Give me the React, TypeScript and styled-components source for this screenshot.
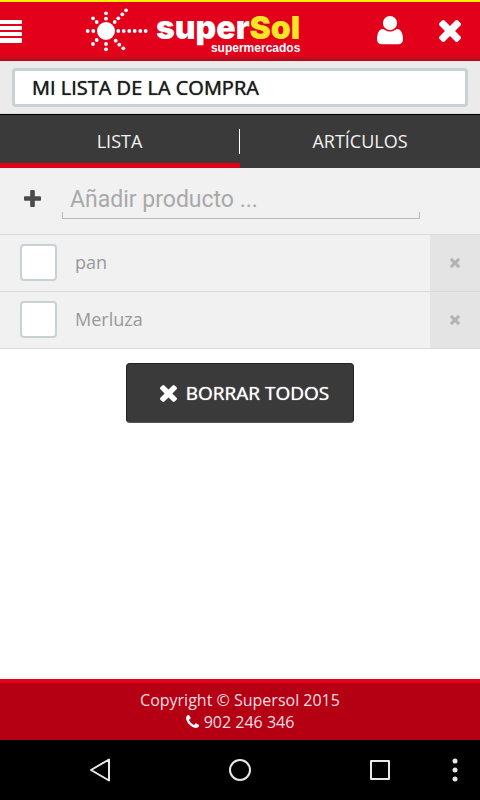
import React, { useState } from "react";
import styled, { createGlobalStyle } from "styled-components";

const GlobalStyle = createGlobalStyle`
  * { box-sizing: border-box; }
  body { margin: 0; background: #fff; font-family: "Open Sans", "Noto Sans", sans-serif; }
  button, input { font: inherit; margin: 0; padding: 0; border: 0; border-radius: 0; }
  button { background: none; color: inherit; cursor: pointer; }
  ul { list-style: none; margin: 0; padding: 0; }
`;

const Page = styled.div`
  display: flex;
  flex-direction: column;
  min-height: 100vh;
`;

const Header = styled.header`
  display: flex;
  align-items: center;
  height: 61px;
  background: #e3001b;
  border-top: 2px solid #fff200;
  border-bottom: 1px solid #c00010;
  box-shadow: inset 0 -3px 0 #b90f1e;
`;

const IconButton = styled.button<{ $width: number }>`
  display: flex;
  align-items: center;
  justify-content: flex-start;
  width: ${(p) => p.$width}px;
  height: 56px;
  color: #fff;
`;

const HeaderActions = styled.div`
  display: flex;
  align-items: center;
  gap: 36px;
  margin-left: auto;
  padding-right: 19px;
`;

const Logo = styled.a`
  display: flex;
  align-items: flex-start;
  height: 56px;
  color: #fff;
  text-decoration: none;
`;

const LogoWords = styled.span`
  display: flex;
  flex-direction: column;
  align-items: flex-end;
  margin-left: 8px;
  padding-top: 8px;
`;

const LogoName = styled.span`
  font: 900 32px/34px Inter, sans-serif;

  span {
    color: #f9e526;
  }
`;

const LogoTag = styled.span`
  font: bold 12px/14px "Liberation Sans", sans-serif;
  margin-top: -4px;
`;

const TitleBar = styled.div`
  padding: 7px 12px 6px;
  background: #ebebeb;
  border-bottom: 1px solid #ddd;
`;

const TitleInput = styled.input`
  display: block;
  width: 100%;
  height: 39px;
  padding: 0 17px;
  border: 3px solid #c8d1d3;
  border-radius: 4px;
  background: #fff;
  color: #1c1c1c;
  font-size: 20px;
  text-shadow: 0 0 1px #1c1c1c;
`;

const Tabs = styled.div`
  display: grid;
  grid-template-columns: 1fr 1fr;
  background: #3a3a3a;
  border-top: 1px solid #000;
`;

const Tab = styled.button<{ $active: boolean }>`
  display: flex;
  align-items: center;
  height: 53px;
  padding-top: 4px;
  border-bottom: 5px solid ${(p) => (p.$active ? "#e3001b" : "transparent")};
  color: #f2f2f2;
  font-size: 18px;
  line-height: 24px;

  span {
    flex: 1;
  }

  &:first-child::after {
    content: "";
    width: 1px;
    height: 25px;
    background: #fff;
  }
`;

const AddRow = styled.form`
  display: flex;
  align-items: center;
  height: 66px;
  padding: 0 60px 4px 24px;
  background: #f1f1f1;
`;

const AddButton = styled.button`
  display: flex;
  width: 38px;
  margin-top: -2px;
  color: #4a4a4a;
`;

const AddInput = styled.input`
  flex: 1;
  min-width: 0;
  height: 40px;
  padding: 0 8px 0 8px;
  background:
    linear-gradient(#bbb, #bbb) left bottom / 100% 1px no-repeat,
    linear-gradient(#bbb, #bbb) left bottom / 1px 7px no-repeat,
    linear-gradient(#bbb, #bbb) right bottom / 1px 7px no-repeat;
  color: #555;
  font-family: Roboto, sans-serif;
  font-size: 23px;

  &::placeholder {
    color: #a9a9a9;
  }
`;

const Item = styled.li`
  display: flex;
  align-items: stretch;
  background: #f1f1f1;
  border-top: 1px solid #dadada;

  &:last-child {
    border-bottom: 1px solid #dadada;
  }
`;

const ItemLabel = styled.label`
  display: flex;
  flex: 1;
  align-items: center;
  gap: 18px;
  min-height: 56px;
  padding: 0 0 2px 20px;
  color: #999;
  font-size: 18px;
  line-height: 24px;
`;

const Checkbox = styled.input`
  appearance: none;
  width: 37px;
  height: 37px;
  border: 2px solid #c8d1d4;
  border-radius: 4px;
  background: #fff;

  &:checked {
    background: #c8d1d4;
  }
`;

const RemoveButton = styled.button`
  display: flex;
  align-items: center;
  justify-content: center;
  width: 50px;
  background: #e4e4e4;
  color: #b4b4b4;
`;

const ClearButton = styled.button`
  display: flex;
  align-items: center;
  align-self: center;
  gap: 9px;
  height: 60px;
  margin: 14px 0;
  padding: 0 24px 0 33px;
  border: 1px solid #222;
  border-bottom-color: #555;
  border-radius: 4px;
  background: #3a3a3a;
  color: #fff;
  font-size: 19px;
  text-shadow: 0 0 1px #fff;
`;

const Footer = styled.footer`
  margin-top: auto;
  padding: 6px 0 7px;
  border-top: 4px solid #e3001b;
  background: #b50014;
  color: #f6dfe1;
  font-size: 16px;
  line-height: 22px;
  text-align: center;

  p {
    margin: 0;
  }

  a {
    display: inline-flex;
    align-items: center;
    gap: 5px;
    color: inherit;
    text-decoration: none;
  }
`;

const SystemBar = styled.nav`
  display: grid;
  grid-template-columns: 30px 1fr 1fr 1fr 30px;
  height: 60px;
  background: #000;
  color: #e8e8e8;
`;

const SystemButton = styled.button`
  display: flex;
  align-items: center;
  justify-content: center;

  &:last-child {
    justify-content: flex-start;
    padding-left: 2px;
  }
`;

const TimesIcon = ({ size }: { size: number }) => (
  <svg width={size} height={size} viewBox="302 366 1188 1188" fill="currentColor" aria-hidden="true">
    <path d="M1490 1322q0 40-28 68l-136 136q-28 28-68 28t-68-28l-294-294-294 294q-28 28-68 28t-68-28l-136-136q-28-28-28-68t28-68l294-294-294-294q-28-28-28-68t28-68l136-136q28-28 68-28t68 28l294 294 294-294q28-28 68-28t68 28l136 136q28 28 28 68t-28 68l-294 294 294 294q28 28 28 68z" />
  </svg>
);

const PlusIcon = () => (
  <svg width="17" height="17" viewBox="192 128 1408 1408" fill="currentColor" aria-hidden="true">
    <path d="M1600 736v192q0 40-28 68t-68 28h-416v416q0 40-28 68t-68 28h-192q-40 0-68-28t-28-68v-416h-416q-40 0-68-28t-28-68v-192q0-40 28-68t68-28h416v-416q0-40 28-68t68-28h192q40 0 68 28t28 68v416h416q40 0 68 28t28 68z" />
  </svg>
);

const UserIcon = () => (
  <svg width="26" height="31" viewBox="0 -128 1408 1680" fill="currentColor" aria-hidden="true">
    <g transform="translate(0 1280) scale(1 -1)">
      <path d="M1408 131q0-120-73-189.5t-194-69.5h-874q-121 0-194 69.5t-73 189.5q0 53 3.5 103.5t14 109t26.5 108.5t43 97.5t62 81t85.5 53.5t111.5 20q9 0 42-21.5t74.5-48t108-48t133.5-21.5t133.5 21.5t108 48t74.5 48t42 21.5q61 0 111.5-20t85.5-53.5t62-81t43-97.5t26.5-108.5t14-109t3.5-103.5zM1088 1024q0-159-112.5-271.5t-271.5-112.5t-271.5 112.5t-112.5 271.5t112.5 271.5t271.5 112.5t271.5-112.5t112.5-271.5z" />
    </g>
  </svg>
);

const PhoneIcon = () => (
  <svg width="13" height="13" viewBox="192 128 1408 1408" fill="#fff" aria-hidden="true">
    <path d="M1600 1240q0 27-10 70.5t-21 68.5q-21 50-122 106-94 51-186 51-27 0-53-3.5t-57.5-12.5-47-14.5-55.5-20.5-49-18q-98-35-175-83-127-79-264-216t-216-264q-48-77-83-175-3-9-18-49t-20.5-55.5-14.5-47-12.5-57.5-3.5-53q0-92 51-186 56-101 106-122 25-11 68.5-21t70.5-10q14 0 21 3 18 6 53 76 11 19 30 54t35 63.5 31 53.5q3 4 17.5 25t21.5 35.5 7 28.5q0 20-28.5 50t-62 55-62 53-28.5 46q0 9 5 22.5t8.5 20.5 14 24 11.5 19q76 137 174 235t235 174q2 1 19 11.5t24 14 20.5 8.5 22.5 5q18 0 46-28.5t53-62 55-62 50-28.5q14 0 28.5 7t35.5 21.5 25 17.5q25 15 53.5 31t63.5 35 54 30q70 35 76 53 3 7 3 21z" />
  </svg>
);

const MenuIcon = () => (
  <svg width="22" height="24" viewBox="0 0 22 24" fill="currentColor" aria-hidden="true">
    <path d="M0 1h21q1 0 1 1v2q0 1-1 1H0zM0 7h21q1 0 1 1v2q0 1-1 1H0zM0 13h21q1 0 1 1v2q0 1-1 1H0zM0 19h21q1 0 1 1v3q0 1-1 1H0z" />
  </svg>
);

const SUN_DOTS: [number, number][] = [
  [118.3, 31], [123.7, 31], [129.3, 31], [134.7, 31], [140.3, 31], [145.7, 31],
  [87.7, 31], [93.3, 31],
  [106, 13.3], [106, 18.7], [106, 44], [106, 49.3],
  [96.7, 22], [93, 18.3], [96.7, 40], [93, 44],
  [114.7, 22], [118.3, 18.3], [122.3, 14.3], [126, 10.3],
  [115.7, 40.7], [119.3, 44.7], [123.3, 48.3],
];

const SunIcon = () => (
  <svg width="63" height="54" viewBox="85 3 63 54" fill="currentColor" aria-hidden="true">
    <circle cx="106" cy="31" r="9" />
    {SUN_DOTS.map(([x, y]) => (
      <circle key={`${x}-${y}`} cx={x} cy={y} r="1.9" />
    ))}
  </svg>
);

export default function App() {
  const [title, setTitle] = useState("MI LISTA DE LA COMPRA");
  const [tab, setTab] = useState("LISTA");
  const [draft, setDraft] = useState("");
  const [items, setItems] = useState(["pan", "Merluza"]);

  const addItem = (event: React.FormEvent) => {
    event.preventDefault();
    if (draft.trim()) {
      setItems([...items, draft.trim()]);
      setDraft("");
    }
  };

  return (
    <Page>
      <GlobalStyle />
      <Header>
        <IconButton $width={85} aria-label="Menú">
          <MenuIcon />
        </IconButton>
        <Logo href="#" aria-label="superSol supermercados">
          <SunIcon />
          <LogoWords>
            <LogoName>super<span>Sol</span></LogoName>
            <LogoTag>supermercados</LogoTag>
          </LogoWords>
        </Logo>
        <HeaderActions>
          <IconButton $width={26} aria-label="Mi cuenta">
            <UserIcon />
          </IconButton>
          <IconButton $width={22} aria-label="Cerrar">
            <TimesIcon size={22} />
          </IconButton>
        </HeaderActions>
      </Header>

      <TitleBar>
        <TitleInput aria-label="Nombre de la lista" value={title} onChange={(e) => setTitle(e.target.value)} />
      </TitleBar>

      <Tabs role="tablist">
        {["LISTA", "ARTÍCULOS"].map((name) => (
          <Tab key={name} role="tab" aria-selected={tab === name} $active={tab === name} onClick={() => setTab(name)}>
            <span>{name}</span>
          </Tab>
        ))}
      </Tabs>

      <AddRow onSubmit={addItem}>
        <AddButton type="submit" aria-label="Añadir">
          <PlusIcon />
        </AddButton>
        <AddInput
          aria-label="Añadir producto"
          placeholder="Añadir producto ..."
          value={draft}
          onChange={(e) => setDraft(e.target.value)}
        />
      </AddRow>

      <ul>
        {items.map((item, index) => (
          <Item key={`${item}-${index}`}>
            <ItemLabel>
              <Checkbox type="checkbox" />
              {item}
            </ItemLabel>
            <RemoveButton aria-label={`Borrar ${item}`} onClick={() => setItems(items.filter((_, i) => i !== index))}>
              <TimesIcon size={10} />
            </RemoveButton>
          </Item>
        ))}
      </ul>

      <ClearButton onClick={() => setItems([])}>
        <TimesIcon size={17} />
        BORRAR TODOS
      </ClearButton>

      <Footer>
        <p>Copyright © Supersol 2015</p>
        <p>
          <a href="tel:902246346">
            <PhoneIcon />
            902 246 346
          </a>
        </p>
      </Footer>

      <SystemBar aria-label="Sistema">
        <span />
        <SystemButton aria-label="Atrás">
          <svg width="24" height="26" viewBox="0 0 24 26" fill="none" stroke="currentColor" strokeWidth="2" strokeLinejoin="round">
            <path d="M21 2.5v21L3 13z" />
          </svg>
        </SystemButton>
        <SystemButton aria-label="Inicio">
          <svg width="24" height="24" viewBox="0 0 24 24" fill="none" stroke="currentColor" strokeWidth="2">
            <circle cx="12" cy="12" r="10" />
          </svg>
        </SystemButton>
        <SystemButton aria-label="Recientes">
          <svg width="22" height="22" viewBox="0 0 22 22" fill="none" stroke="currentColor" strokeWidth="2" strokeLinejoin="round">
            <rect x="2" y="2" width="18" height="18" />
          </svg>
        </SystemButton>
        <SystemButton aria-label="Más opciones">
          <svg width="6" height="24" viewBox="0 0 6 24" fill="currentColor">
            <circle cx="3" cy="3" r="2.5" />
            <circle cx="3" cy="12" r="2.5" />
            <circle cx="3" cy="21" r="2.5" />
          </svg>
        </SystemButton>
      </SystemBar>
    </Page>
  );
}
